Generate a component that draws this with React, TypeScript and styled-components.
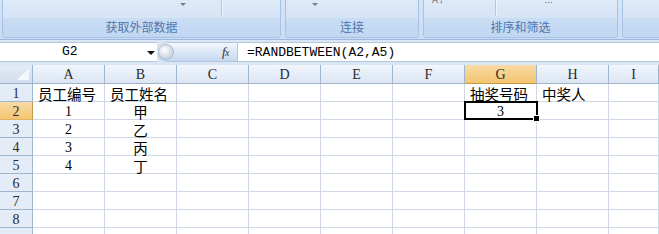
import React from "react";
import styled, { createGlobalStyle, css } from "styled-components";

const GlobalStyle = createGlobalStyle`
  html, body {
    margin: 0;
    padding: 0;
    background: #ffffff;
    overflow: hidden;
  }
  body {
    font-family: "Noto Sans CJK SC", "Liberation Sans", sans-serif;
  }
`;

const Window = styled.div`
  width: 659px;
  height: 234px;
  display: flex;
  flex-direction: column;
  overflow: hidden;
  background: #ffffff;
`;

/* ---------- ribbon ---------- */

const Ribbon = styled.div`
  height: 40px;
  display: flex;
  gap: 4px;
  padding: 0 0 0 2px;
  background: linear-gradient(#d6e5f7, #c9dcf3);
  border-bottom: 1px solid #9bb7dc;
  box-sizing: border-box;
  flex-shrink: 0;
`;

const Group = styled.div<{ $w: number }>`
  width: ${(p) => p.$w}px;
  flex-shrink: 0;
  height: 38px;
  display: flex;
  flex-direction: column;
  border: 1px solid #a7c2e4;
  border-top: none;
  border-radius: 0 0 4px 4px;
  box-sizing: border-box;
  overflow: hidden;
`;

const GroupBody = styled.div`
  height: 18px;
  position: relative;
  background: linear-gradient(#dfeaf8, #d6e4f6);
`;

const GroupLabel = styled.div`
  flex: 1;
  display: flex;
  align-items: center;
  justify-content: center;
  background: linear-gradient(#c9ddf4, #c1d7f1);
  color: #5076ae;
  font-size: 12px;
  line-height: 1;
  padding-bottom: 1px;
`;

const Arrow = styled.span<{ $x: number }>`
  position: absolute;
  left: ${(p) => p.$x}px;
  top: 3px;
  width: 0;
  height: 0;
  border-left: 3px solid transparent;
  border-right: 3px solid transparent;
  border-top: 3px solid #6a7f99;
`;

const Sep = styled.span<{ $x: number }>`
  position: absolute;
  left: ${(p) => p.$x}px;
  top: 0;
  width: 1px;
  height: 16px;
  background: #b3c9e4;
  box-shadow: 1px 0 0 #eef4fb;
`;

const Fragment = styled.span<{ $x: number }>`
  position: absolute;
  left: ${(p) => p.$x}px;
  top: -5px;
  font-family: "Liberation Sans", sans-serif;
  font-size: 9px;
  color: #4b5a70;
  letter-spacing: 1px;
`;

/* ---------- formula bar ---------- */

const FormulaBar = styled.div`
  height: 25px;
  display: flex;
  align-items: flex-start;
  padding-top: 2px;
  box-sizing: border-box;
  background: #dbe6f4;
  flex-shrink: 0;
`;

const NameBox = styled.div`
  width: 157px;
  height: 20px;
  box-sizing: border-box;
  background: #ffffff;
  border-top: 1px solid #b4c6dd;
  border-bottom: 1px solid #b4c6dd;
  position: relative;
  font-family: "Liberation Mono", monospace;
  font-size: 13px;
  color: #000;
`;

const NameText = styled.span`
  position: absolute;
  left: 62px;
  top: 1px;
`;

const DropTriangle = styled.span`
  position: absolute;
  left: 147px;
  top: 8px;
  width: 0;
  height: 0;
  border-left: 4px solid transparent;
  border-right: 4px solid transparent;
  border-top: 4px solid #111;
`;

const FxWidget = styled.div`
  width: 80px;
  height: 20px;
  box-sizing: border-box;
  display: flex;
  align-items: center;
  justify-content: space-between;
  padding: 0 8px 0 1px;
  background: linear-gradient(#f2f7fd 0%, #dbe7f6 50%, #c6d9f0 100%);
  border-top: 1px solid #b4c6dd;
  border-bottom: 1px solid #b4c6dd;
  border-radius: 10px 0 0 10px;
`;

const Knob = styled.span`
  width: 16px;
  height: 16px;
  border-radius: 50%;
  box-sizing: border-box;
  border: 1px solid #a9bcd3;
  background: radial-gradient(circle at 40% 35%, #ffffff, #c9d3de 70%);
`;

const Fx = styled.span`
  font-family: "Liberation Serif", serif;
  font-style: italic;
  font-size: 13px;
  color: #333;
  letter-spacing: -0.5px;

  sub {
    font-size: 10px;
    vertical-align: baseline;
  }
`;

const FormulaInput = styled.div`
  flex: 1;
  height: 20px;
  box-sizing: border-box;
  background: #ffffff;
  border-top: 1px solid #b4c6dd;
  border-bottom: 1px solid #b4c6dd;
  border-left: 1px solid #b4c6dd;
  padding-left: 9px;
  display: flex;
  align-items: center;
  font-family: "Liberation Mono", monospace;
  font-size: 13px;
  color: #000;
`;

/* ---------- sheet ---------- */

const Sheet = styled.div`
  display: grid;
  grid-template-columns: 33px repeat(8, 72px) 1fr;
  grid-template-rows: 19px repeat(9, 18px);
  flex: 1;
`;

const headerBase = css`
  box-sizing: border-box;
  display: flex;
  align-items: center;
  justify-content: center;
  font-family: "Liberation Serif", serif;
  font-size: 14px;
  color: #2a2a2a;
  border-right: 1px solid #9eb6ce;
  border-bottom: 1px solid #9eb6ce;
`;

const Corner = styled.div`
  ${headerBase};
  position: relative;
  background: linear-gradient(#e3ebf5, #d2ddeb);
`;

const CornerMark = styled.svg`
  position: absolute;
  right: 3px;
  bottom: 3px;
`;

const ColHead = styled.div<{ $active?: boolean }>`
  ${headerBase};
  padding-top: 1px;
  background: ${(p) =>
    p.$active
      ? "linear-gradient(#f9dba6, #f3c570)"
      : "linear-gradient(#f1f5fb 0%, #e4ecf7 60%, #dbe5f2 100%)"};
  border-bottom-color: ${(p) => (p.$active ? "#c29b4a" : "#9eb6ce")};
`;

const RowHead = styled.div<{ $active?: boolean }>`
  ${headerBase};
  padding-top: 2px;
  background: ${(p) =>
    p.$active ? "linear-gradient(#f9dba6, #f3c570)" : "#e4ecf7"};
  border-right-color: ${(p) => (p.$active ? "#c29b4a" : "#9eb6ce")};
  border-bottom-color: ${(p) => (p.$active ? "#e0b566" : "#9eb6ce")};
`;

const Cell = styled.div<{ $align?: "left" | "center"; $selected?: boolean }>`
  box-sizing: border-box;
  position: relative;
  border-right: 1px solid #d0d7e5;
  border-bottom: 1px solid #d0d7e5;
  display: flex;
  align-items: center;
  justify-content: ${(p) => (p.$align === "left" ? "flex-start" : "center")};
  padding-left: ${(p) => (p.$align === "left" ? "5px" : "0")};
  padding-top: 2px;
  font-family: "Liberation Serif", serif;
  font-size: 14px;
  line-height: 15px;
  color: #000;
  white-space: nowrap;

  ${(p) =>
    p.$selected &&
    css`
      &::after {
        content: "";
        position: absolute;
        left: -1px;
        top: -1px;
        right: -2px;
        bottom: -1px;
        border: 2px solid #000;
        pointer-events: none;
      }
      &::before {
        content: "";
        position: absolute;
        right: -4px;
        bottom: -3px;
        width: 5px;
        height: 5px;
        background: #000;
        border: 1px solid #fff;
        z-index: 2;
      }
    `}
`;

const Cjk = styled.span`
  font-family: "Noto Sans CJK SC", sans-serif;
  font-size: 14.5px;
  line-height: 15px;
`;

const columns = ["A", "B", "C", "D", "E", "F", "G", "H", "I"];

type CellData = { text: string; align?: "left" | "center"; cjk?: boolean };

const data: Record<string, CellData> = {
  A1: { text: "员工编号", align: "left", cjk: true },
  B1: { text: "员工姓名", align: "left", cjk: true },
  G1: { text: "抽奖号码", align: "left", cjk: true },
  H1: { text: "中奖人", align: "left", cjk: true },
  A2: { text: "1" },
  B2: { text: "甲", cjk: true },
  G2: { text: "3" },
  A3: { text: "2" },
  B3: { text: "乙", cjk: true },
  A4: { text: "3" },
  B4: { text: "丙", cjk: true },
  A5: { text: "4" },
  B5: { text: "丁", cjk: true },
};

// row 9 sits below the window edge, only its top shows
const rows = [1, 2, 3, 4, 5, 6, 7, 8, 9];

export default function App() {
  return (
    <>
      <GlobalStyle />
      <Window>
        <Ribbon>
          <Group $w={279}>
            <GroupBody>
              <Arrow $x={177} />
              <Sep $x={218} />
            </GroupBody>
            <GroupLabel>获取外部数据</GroupLabel>
          </Group>
          <Group $w={134}>
            <GroupBody>
              <Arrow $x={26} />
            </GroupBody>
            <GroupLabel>连接</GroupLabel>
          </Group>
          <Group $w={195}>
            <GroupBody>
              <Fragment $x={8}>A↓</Fragment>
              <Sep $x={71} />
              <Fragment $x={120}>…</Fragment>
            </GroupBody>
            <GroupLabel>排序和筛选</GroupLabel>
          </Group>
          <Group $w={80}>
            <GroupBody />
            <GroupLabel />
          </Group>
        </Ribbon>

        <FormulaBar>
          <NameBox>
            <NameText>G2</NameText>
            <DropTriangle />
          </NameBox>
          <FxWidget>
            <Knob />
            <Fx>
              f<sub>x</sub>
            </Fx>
          </FxWidget>
          <FormulaInput>=RANDBETWEEN(A2,A5)</FormulaInput>
        </FormulaBar>

        <Sheet>
          <Corner>
            <CornerMark width="12" height="12" viewBox="0 0 12 12">
              <polygon points="12,0 12,12 0,12" fill="#f4f7fb" />
            </CornerMark>
          </Corner>
          {columns.map((c) => (
            <ColHead key={c} $active={c === "G"}>
              {c}
            </ColHead>
          ))}
          {rows.map((r) => (
            <React.Fragment key={r}>
              <RowHead $active={r === 2}>{r < 9 ? r : null}</RowHead>
              {columns.map((c) => {
                const d = data[`${c}${r}`];
                return (
                  <Cell
                    key={c}
                    $align={d?.align}
                    $selected={c === "G" && r === 2}
                  >
                    {d ? d.cjk ? <Cjk>{d.text}</Cjk> : d.text : null}
                  </Cell>
                );
              })}
            </React.Fragment>
          ))}
        </Sheet>
      </Window>
    </>
  );
}
